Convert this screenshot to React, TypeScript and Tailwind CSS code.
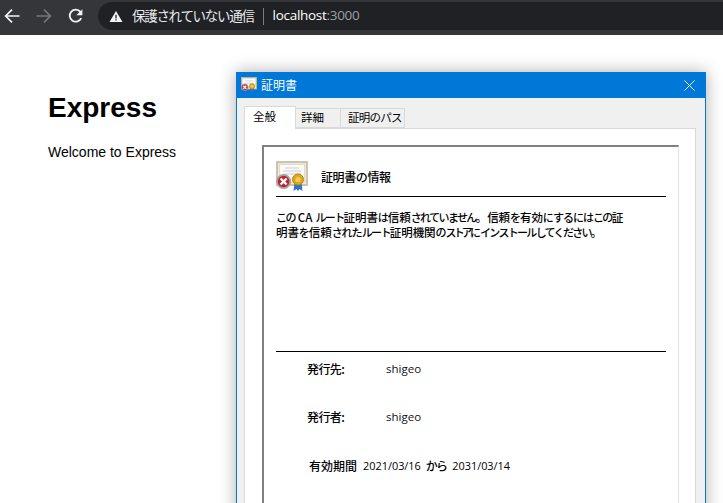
import React from "react";

const CertIcon = ({ size }: { size: number }) => (
  <svg width={size} height={size} viewBox="0 0 32 32" className="block">
    <rect x="1" y="1" width="30" height="23" fill="#efe9dc" stroke="#c4b79e" strokeWidth="1.6" />
    <rect x="3.5" y="3.5" width="25" height="18" fill="#fbfaf6" stroke="#ddd5c2" strokeWidth="0.8" />
    <path d="M9 7h14M7 10h18M7 13h18" stroke="#c7d0e0" strokeWidth="1" />
    <path d="M18.5 22l-1 8 3-2 1.5 2 1.5-2 3 2-1-8z" fill="#2f6fd0" />
    <circle cx="22" cy="18.5" r="5.5" fill="#e0a71c" stroke="#b98612" strokeWidth="1" />
    <circle cx="22" cy="18.5" r="2.6" fill="#f3cc58" />
    <circle cx="7.6" cy="20.5" r="6.6" fill="#c4202e" stroke="#a3a3a3" strokeWidth="1.8" />
    <path d="M4.6 17.5l6 6M10.6 17.5l-6 6" stroke="#fff" strokeWidth="2.4" />
  </svg>
);

const jp = "font-['Noto_Sans_CJK_JP','Noto_Sans',sans-serif]";

// Run classes: the reference font sets kana narrower than kanji.
const K = "text-[11.5px] tracking-[-0.1px]";
const H10 = "text-[11px] tracking-[-1px]";
const H9 = "text-[11px] tracking-[-1.6px]";
const H8 = "text-[11px] tracking-[-1.7px]";
const H7 = "text-[11px] tracking-[-2.8px]";

const line1: [string, string][] = [
  ["この", H9],
  ["CA", "mx-[3px] text-[11.5px] tracking-[0px]"],
  ["ルート", H9],
  ["証明書", K],
  ["は", H10],
  ["信頼", K],
  ["されていません。", H9],
  ["信頼", "ml-[2px] text-[11.5px] tracking-[-0.1px]"],
  ["を", H10],
  ["有効", K],
  ["にするには", H10],
  ["この", H9],
  ["証", K],
];

const line2: [string, string][] = [
  ["明書", K],
  ["を", H10],
  ["信頼", K],
  ["された", H10],
  ["ルート", H9],
  ["証明機関", K],
  ["の", H10],
  ["ストア", H7],
  ["に", H10],
  ["インストール", H8],
  ["してください。", H8],
];

const Row = ({ label, value, gap }: { label: string; value: string; gap: string }) => (
  <div className={`flex items-center text-[12px] leading-[16px] text-black ${gap}`}>
    <span className="w-[79px] font-medium tracking-[-0.6px]">{label}</span>
    <span className="font-['Open_Sans',sans-serif] text-[11.5px] text-[#111]">{value}</span>
  </div>
);

export default function App() {
  return (
    <div className="relative h-[503px] w-[723px] overflow-hidden bg-white font-['Liberation_Sans',sans-serif]">
      <header className="flex h-[35px] items-start bg-[#35363a] pt-[2px]">
        <div className="flex h-[28px] w-[98px] items-center pl-[3px] text-white">
          <svg width="18" height="18" viewBox="0 0 18 18" fill="none" stroke="#f1f3f4" strokeWidth="1.7">
            <path d="M16.5 9H2.8M9 2.6 2.6 9 9 15.4" />
          </svg>
          <svg width="18" height="18" viewBox="0 0 18 18" fill="none" stroke="#75777a" strokeWidth="1.7" className="ml-[14px]">
            <path d="M1.5 9h13.7M9 2.6 15.4 9 9 15.4" />
          </svg>
          <svg width="16" height="16" viewBox="0 0 16 16" fill="none" className="ml-[15px]">
            <path d="M13.2 10.2A6 6 0 1 1 12.4 3.9" stroke="#f1f3f4" strokeWidth="1.8" />
            <path d="M14.4 1.2v6h-6z" fill="#f1f3f4" />
          </svg>
        </div>
        <div className="flex h-[28px] flex-1 items-center rounded-l-[14px] bg-[#202124] pl-[11px]">
          <svg width="14" height="13" viewBox="0 0 15 14" className="mr-[9px]">
            <path d="M7.5 1 14.5 13H.5z" fill="#f1f3f4" />
            <path d="M6.8 5.2h1.4v4H6.8zM6.8 10h1.4v1.4H6.8z" fill="#202124" />
          </svg>
          <span className={`${jp} text-[13.5px] leading-none tracking-[-1.3px] text-[#e8eaed]`}>保護されていない通信</span>
          <span className="mx-[9px] h-[17px] w-px bg-[#7b7d80]" />
          <span className="font-['Open_Sans',sans-serif] text-[13.5px] font-medium leading-none tracking-[-0.3px] text-white">
            localhost<span className="font-normal text-[#9aa0a6]">:3000</span>
          </span>
        </div>
      </header>

      <main className="px-[48px] pt-[57px] text-black">
        <h1 className="text-[28px] font-bold leading-[32px]">Express</h1>
        <p className="mt-[20px] text-[14px] leading-[16px]">Welcome to Express</p>
      </main>

      <section className={`${jp} absolute left-[236px] top-[72px] h-[460px] w-[470px] border border-[#0078d7] bg-[#f0f0f0] shadow-[0_0_16px_rgba(0,0,0,0.32)]`}>
        <div className="flex h-[25px] items-center bg-[#0078d7] pb-[1px] pl-[4px] text-white">
          <CertIcon size={16} />
          <span className="ml-[4px] flex-1 text-[12px] leading-none">証明書</span>
          <svg width="11" height="11" viewBox="0 0 11 11" stroke="#fff" strokeWidth="1" className="mr-[10px]">
            <path d="M.5.5l10 10M10.5.5l-10 10" />
          </svg>
        </div>

        <div className="px-[7px] pt-[8px]">
          <div className="relative z-10 flex h-[22px] items-end text-[11.5px] leading-none text-black">
            <div className="-mb-px flex h-[23px] w-[52px] items-center border border-b-0 border-[#d9d9d9] bg-white pb-[2px] pl-[8px]">全般</div>
            <div className="flex h-[20px] w-[45px] items-center border border-l-0 border-[#d9d9d9] bg-[#f0f0f0] pl-[5px]">詳細</div>
            <div className="flex h-[20px] w-[64px] items-center border border-l-0 border-[#d9d9d9] bg-[#f0f0f0] pl-[7px] tracking-[-0.75px]">証明のパス</div>
          </div>
          <div className="h-[400px] w-[452px] border border-[#d9d9d9] bg-white pl-[17px] pt-[16px]">
            <div className="h-[400px] w-[417px] border-l-2 border-r border-t-2 border-l-[#808080] border-r-[#e3e3e3] border-t-[#808080] pl-[12px] pr-[12px]">
              <div className="flex h-[50px] items-center border-b border-black pt-[10px]">
                <CertIcon size={32} />
                <span className="ml-[13px] text-[12px] font-medium leading-none tracking-[-0.4px] text-black">証明書の情報</span>
              </div>
              <p className="mt-[13px] whitespace-nowrap text-[10px] font-medium leading-[15px] text-black">
                {line1.map(([t, c], i) => (
                  <span key={i} className={c}>{t}</span>
                ))}
                <br />
                {line2.map(([t, c], i) => (
                  <span key={i} className={c}>{t}</span>
                ))}
              </p>
              <div className="mt-[111px] border-t border-black pl-[31px] pt-[9px]">
                <Row label="発行先:" value="shigeo" gap="mb-[32px]" />
                <Row label="発行者:" value="shigeo" gap="mb-[33px]" />
                <div className="flex items-center pl-[2px] text-[12px] leading-[16px] text-black">
                  <span className="font-medium">有効期間</span>
                  <span className="ml-[6px] font-['Open_Sans',sans-serif] text-[10.9px]">2021/03/16</span>
                  <span className="ml-[5px] font-medium tracking-[-1.8px]">から</span>
                  <span className="ml-[6px] font-['Open_Sans',sans-serif] text-[10.9px]">2031/03/14</span>
                </div>
              </div>
            </div>
          </div>
        </div>
      </section>
    </div>
  );
}
